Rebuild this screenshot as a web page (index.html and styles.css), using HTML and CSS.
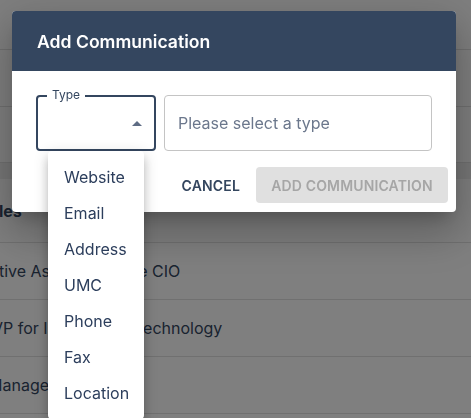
FILE: index.html
```html
<!DOCTYPE html>
<html lang="en">
<head>
<meta charset="utf-8">
<title>Add Communication</title>
<link rel="stylesheet" href="styles.css">
</head>
<body>
<div class="page">
  <div class="row row-first"></div>
  <div class="row"></div>
  <div class="row row-short"></div>
  <div class="band"></div>
  <div class="row row-head"><span class="cell cut-a">Titles</span></div>
  <div class="row"><span class="cell cut-b">Executive Assistant to the CIO</span></div>
  <div class="row"><span class="cell cut-c">AVP for Information Technology</span></div>
  <div class="row"><span class="cell cut-d">Manager</span></div>
</div>

<div class="overlay"></div>

<div class="dialog">
  <div class="dialog-head">Add Communication</div>
  <div class="dialog-body">
    <div class="fields">
      <div class="select">
        <span class="select-label">Type</span>
        <svg class="caret" width="10" height="5" viewBox="0 0 10 5"><path d="M0 5 L5 0 L10 5 Z" fill="#5e6c84"/></svg>
      </div>
      <div class="input"><span class="placeholder">Please select a type</span></div>
    </div>
    <div class="actions">
      <button class="btn btn-text">Cancel</button>
      <button class="btn btn-disabled">Add Communication</button>
    </div>
  </div>
</div>

<ul class="menu">
  <li>Website</li>
  <li>Email</li>
  <li>Address</li>
  <li>UMC</li>
  <li>Phone</li>
  <li>Fax</li>
  <li>Location</li>
</ul>
</body>
</html>
```

FILE: styles.css
```css
html, body {
  margin: 0;
  padding: 0;
  height: 100%;
  overflow: hidden;
  font-family: Inter, "Noto Sans", sans-serif;
  background: #fff;
}

.page {
  display: flex;
  flex-direction: column;
  color: #34465f;
  font-size: 16px;
}

.row {
  height: 57px;
  box-sizing: border-box;
  border-bottom: 1px solid #e0e0e0;
  display: flex;
  align-items: center;
  white-space: nowrap;
}
.row-first { height: 50px; }
.row-short { height: 56px; }
.band { height: 16px; background: #efefef; }
.row-head { height: 64px; font-weight: 700; }

.cut-a { margin-left: -22px; }
.cut-b { margin-left: -47px; }
.cut-c { margin-left: -18px; }
.cut-d { margin-left: -12px; }

.overlay {
  position: fixed;
  inset: 0;
  background: rgba(0, 0, 0, 0.5);
}

.dialog {
  position: absolute;
  left: 12px;
  top: 11px;
  width: 444px;
  background: #fff;
  border-radius: 4px;
  overflow: hidden;
  box-shadow: 0 11px 15px -7px rgba(0,0,0,0.2), 0 24px 38px 3px rgba(0,0,0,0.14), 0 9px 46px 8px rgba(0,0,0,0.12);
}

.dialog-head {
  height: 60px;
  box-sizing: border-box;
  background: #34465f;
  color: #fff;
  font-size: 17.6px;
  font-weight: 600;
  display: flex;
  align-items: center;
  padding-left: 25px;
}

.dialog-body {
  padding: 24px 8px 9px 24px;
  display: flex;
  flex-direction: column;
  gap: 16px;
}

.fields {
  display: flex;
  gap: 8px;
  padding-right: 16px;
}

.select {
  width: 120px;
  height: 56px;
  box-sizing: border-box;
  border: 2px solid #34465f;
  border-radius: 4px;
  position: relative;
  display: flex;
  align-items: center;
  justify-content: flex-end;
  padding-right: 12px;
}

.select-label {
  position: absolute;
  left: 9px;
  top: -9px;
  padding: 0 5px;
  background: #fff;
  font-size: 12px;
  line-height: 14px;
  color: #34465f;
}

.caret { display: block; margin-top: 1px; }

.input {
  flex: 1;
  height: 56px;
  box-sizing: border-box;
  border: 1px solid #c4c4c4;
  border-radius: 4px;
  display: flex;
  align-items: center;
  padding-left: 13px;
}

.placeholder {
  font-size: 16px;
  color: #6b778c;
}

.actions {
  display: flex;
  justify-content: flex-end;
  gap: 8px;
}

.btn {
  font-family: Inter, "Noto Sans", sans-serif;
  font-size: 14px;
  font-weight: 600;
  text-transform: uppercase;
  letter-spacing: 0.15px;
  border: 0;
  border-radius: 4px;
  height: 36px;
  padding: 0 8px;
  background: transparent;
}
.btn-text { color: #34465f; }
.btn-disabled {
  width: 192px;
  background: #e0e0e0;
  color: #a6a6a6;
}

.menu {
  position: absolute;
  left: 48px;
  top: 151px;
  width: 96px;
  margin: 0;
  padding: 8px 0;
  list-style: none;
  background: #fff;
  border-radius: 4px;
  box-shadow: 0 5px 5px -3px rgba(0,0,0,0.2), 0 8px 10px 1px rgba(0,0,0,0.14), 0 3px 14px 2px rgba(0,0,0,0.12);
}
.menu li {
  height: 36px;
  display: flex;
  align-items: center;
  padding-left: 16px;
  font-size: 16px;
  color: #2c3e5c;
}
```
